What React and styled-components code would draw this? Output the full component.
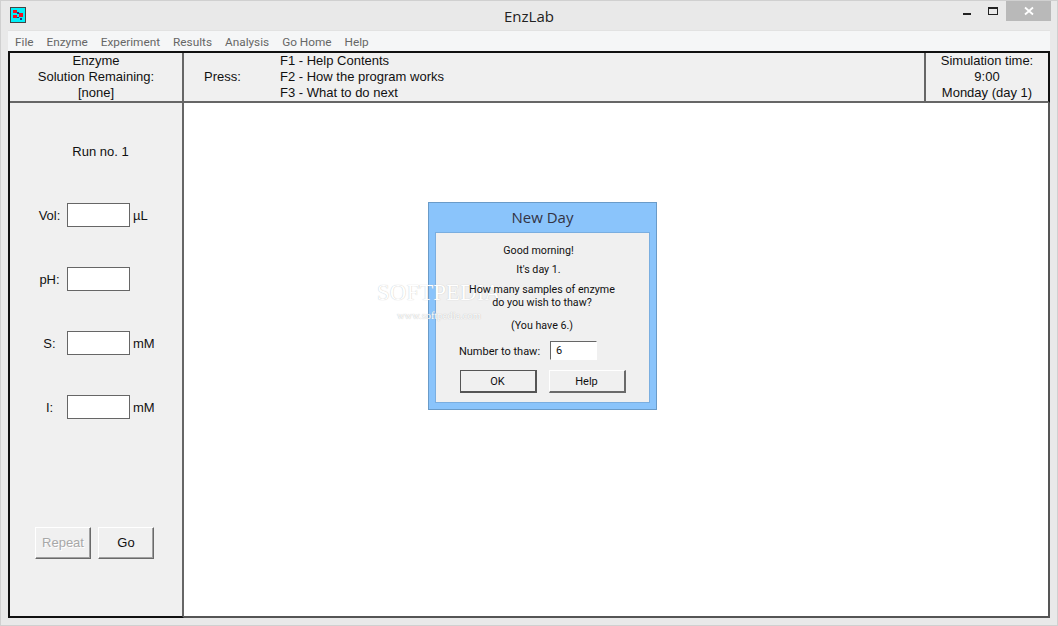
import React from 'react';
import styled, { createGlobalStyle } from 'styled-components';

const GlobalStyle = createGlobalStyle`
	html, body {
		margin: 0;
		padding: 0;
		background: #e9e9e9;
	}
	* {
		box-sizing: border-box;
	}
`;

const fields = [
	{ label: 'Vol:', unit: 'µL' },
	{ label: 'pH:', unit: '' },
	{ label: 'S:', unit: 'mM' },
	{ label: 'I:', unit: 'mM' },
];

const menus = ['File', 'Enzyme', 'Experiment', 'Results', 'Analysis', 'Go Home', 'Help'];

const AppIcon = () => (
	<svg width="16" height="16" viewBox="0 0 16 16">
		<rect x="0.5" y="0.5" width="15" height="15" fill="#00f0f8" stroke="#444" />
		<rect x="3" y="3" width="4" height="3" fill="#f01020" />
		<rect x="9" y="6" width="4" height="4" fill="#f01020" />
		<rect x="3" y="8" width="4" height="3" fill="#f01020" />
		<rect x="7" y="5" width="2" height="2" fill="#203080" />
		<rect x="7" y="10" width="2" height="1" fill="#203080" />
		<rect x="10" y="11" width="2" height="2" fill="#203080" />
	</svg>
);

const App = () => (
	<Window>
		<GlobalStyle />
		<TitleBar>
			<IconSlot><AppIcon /></IconSlot>
			<Title>EnzLab</Title>
			<Controls>
				<Control>
					<svg width="12" height="12" viewBox="0 0 12 12"><rect x="2" y="8" width="8" height="2" fill="#222" /></svg>
				</Control>
				<Control>
					<svg width="12" height="12" viewBox="0 0 12 12"><rect x="1.5" y="2.5" width="9" height="7" fill="none" stroke="#222" /><rect x="1" y="2" width="10" height="2" fill="#222" /></svg>
				</Control>
				<CloseControl>
					<svg width="10" height="10" viewBox="0 0 10 10"><path d="M1 1.5 L9 8.5 M9 1.5 L1 8.5" stroke="#fff" strokeWidth="1.8" /></svg>
				</CloseControl>
			</Controls>
		</TitleBar>
		<MenuBar>
			{menus.map(item => (
				<MenuItem key={item}>{item}</MenuItem>
			))}
		</MenuBar>
		<Frame>
			<Header>
				<EnzymeCell>
					<div>Enzyme</div>
					<div>Solution Remaining:</div>
					<div>[none]</div>
				</EnzymeCell>
				<PressCell>
					<PressLabel>Press:</PressLabel>
					<div>
						<div>F1 - Help Contents</div>
						<div>F2 - How the program works</div>
						<div>F3 - What to do next</div>
					</div>
				</PressCell>
				<TimeCell>
					<div>Simulation time:</div>
					<div>9:00</div>
					<div>Monday (day 1)</div>
				</TimeCell>
			</Header>
			<Body>
				<Sidebar>
					<RunLabel>Run no. 1</RunLabel>
					{fields.map(field => (
						<FieldRow key={field.label}>
							<FieldLabel>{field.label}</FieldLabel>
							<FieldInput />
							<FieldUnit>{field.unit}</FieldUnit>
						</FieldRow>
					))}
					<ButtonRow>
						<PanelButton disabled>Repeat</PanelButton>
						<PanelButton>Go</PanelButton>
					</ButtonRow>
				</Sidebar>
				<Canvas>
					<Dialog>
						<DialogTitle>New Day</DialogTitle>
						<DialogBody>
							<DialogLine $gap={6} $pad={8}>Good morning!</DialogLine>
							<DialogLine $gap={7} $pad={8}>It's day 1.</DialogLine>
							<DialogLine $gap={10} $pad={1}>How many samples of enzyme<br />do you wish to thaw?</DialogLine>
							<DialogLine $gap={6} $pad={1}>(You have 6.)</DialogLine>
							<ThawRow>
								<ThawLabel>Number to thaw:</ThawLabel>
								<ThawBox>6</ThawBox>
							</ThawRow>
							<DialogButtons>
								<DialogButton $primary>OK</DialogButton>
								<DialogButton>Help</DialogButton>
							</DialogButtons>
						</DialogBody>
					</Dialog>
					<Watermark>
						<WatermarkName>SOFTPEDIA</WatermarkName>
						<WatermarkUrl>www.softpedia.com</WatermarkUrl>
					</Watermark>
				</Canvas>
			</Body>
		</Frame>
	</Window>
);

export default App;

const Window = styled.div`
	width: 1058px;
	height: 626px;
	background: #e9e9e9;
	border: 1px solid #d0d0d0;
	padding: 0 7px 7px;
	display: flex;
	flex-direction: column;
	overflow: hidden;
	position: relative;
`;

const TitleBar = styled.div`
	height: 29px;
	flex: none;
	display: flex;
	align-items: flex-start;
	position: relative;
`;

const IconSlot = styled.div`
	width: 16px;
	height: 16px;
	margin: 6px 0 0 2px;
`;

const Title = styled.div`
	text-align: center;
	font: 15px/30px "Open Sans", sans-serif;
	color: #222;
	position: absolute;
	left: 0;
	right: 0;
`;

const Controls = styled.div`
	margin-left: auto;
	display: flex;
	z-index: 1;
	margin-right: -1px;
`;

const Control = styled.div`
	width: 26px;
	height: 20px;
	display: flex;
	align-items: center;
	justify-content: center;
`;

const CloseControl = styled(Control)`
	width: 45px;
	background: #b9b9b9;
`;

const MenuBar = styled.div`
	height: 21px;
	flex: none;
	background: #f5f6f7;
	display: flex;
	align-items: center;
	padding: 1px 0 0 7px;
	gap: 13px;
	border-top: 1px solid #e2e2e2;
`;

const MenuItem = styled.span`
	font: 11.8px Roboto, sans-serif;
	color: #666;
`;

const Frame = styled.div`
	flex: 1;
	border-top: 2px solid #111;
	border-left: 2px solid #111;
	display: flex;
	flex-direction: column;
	min-height: 0;
`;

const Header = styled.div`
	height: 50px;
	flex: none;
	display: grid;
	grid-template-columns: 174px 1fr 126px;
	background: #f0f0f0;
	font: 13px/16px "Liberation Sans", sans-serif;
	color: #111;
`;

const EnzymeCell = styled.div`
	text-align: center;
	border-right: 2px solid #666;
	border-bottom: 2px solid #666;
`;

const PressCell = styled.div`
	display: flex;
	padding-left: 20px;
	align-items: flex-start;
	border-bottom: 2px solid #666;
`;

const PressLabel = styled.div`
	width: 76px;
	margin-top: 16px;
`;

const TimeCell = styled.div`
	text-align: center;
	border-left: 2px solid #666;
	border-right: 2px solid #111;
	border-bottom: 2px solid #666;
`;

const Body = styled.div`
	flex: 1;
	display: flex;
	min-height: 0;
`;

const Sidebar = styled.div`
	width: 174px;
	flex: none;
	background: #f0f0f0;
	border-right: 2px solid #666;
	border-bottom: 2px solid #111;
	padding-top: 41px;
	display: flex;
	flex-direction: column;
	font: 13px/16px "Liberation Sans", sans-serif;
	color: #111;
`;

const RunLabel = styled.div`
	text-align: center;
	padding-left: 9px;
	height: 39px;
`;

const FieldRow = styled.div`
	height: 24px;
	margin: 20px 0;
	display: flex;
	align-items: center;
`;

const FieldLabel = styled.div`
	width: 57px;
	text-align: center;
	padding: 2px 0 0 22px;
`;

const FieldInput = styled.div`
	width: 63px;
	height: 24px;
	background: #fff;
	border: 1px solid #666;
`;

const FieldUnit = styled.div`
	margin-left: 3px;
	padding-top: 2px;
`;

const ButtonRow = styled.div`
	display: flex;
	gap: 7px;
	padding-left: 25px;
	margin-top: 88px;
`;

const PanelButton = styled.div`
	width: 56px;
	height: 32px;
	display: flex;
	align-items: center;
	justify-content: center;
	background: #f0f0f0;
	border: 1px solid;
	border-color: #fff #6a6a6a #6a6a6a #fff;
	box-shadow: inset -1px -1px 0 #a0a0a0;
	color: ${p => (p.disabled ? '#a8a8a8' : '#111')};
	text-shadow: ${p => (p.disabled ? '1px 1px 0 #fff' : 'none')};
`;

const Canvas = styled.div`
	flex: 1;
	background: #fff;
	position: relative;
	border-right: 2px solid #555;
	border-bottom: 2px solid #555;
`;

const Dialog = styled.div`
	position: absolute;
	left: 244px;
	top: 99px;
	width: 229px;
	height: 208px;
	background: #8ac4fb;
	border: 1px solid #6a9bc8;
	padding: 0 6px 6px;
	display: flex;
	flex-direction: column;
`;

const DialogTitle = styled.div`
	height: 29px;
	flex: none;
	text-align: center;
	font: 15px/29px "Open Sans", sans-serif;
	color: #334;
`;

const DialogBody = styled.div`
	flex: 1;
	background: #f0f0f0;
	border: 1px solid #7aaee0;
	padding-top: 11px;
	display: flex;
	flex-direction: column;
	align-items: center;
	font: 11px/13px Roboto, sans-serif;
	color: #111;
`;

const DialogLine = styled.div`
	position: relative;
	z-index: 2;
	text-align: center;
	font-size: 10.7px;
	margin-bottom: ${p => p.$gap}px;
	padding-right: ${p => p.$pad}px;
`;

const ThawRow = styled.div`
	display: flex;
	align-items: center;
	gap: 10px;
	margin-top: 3px;
	padding-right: 29px;
`;

const ThawLabel = styled.span`
	padding-top: 1px;
`;

const ThawBox = styled.div`
	width: 47px;
	height: 19px;
	background: #fff;
	border: 1px solid #666;
	border-right-color: #fff;
	border-bottom-color: #fff;
	padding: 2px 0 0 5px;
`;

const DialogButtons = styled.div`
	display: flex;
	gap: 12px;
	margin-top: 10px;
`;

const DialogButton = styled.div`
	width: 77px;
	height: 23px;
	display: flex;
	align-items: center;
	justify-content: center;
	background: #f0f0f0;
	border: 1px solid;
	border-color: ${p => (p.$primary ? '#555' : '#fff #6a6a6a #6a6a6a #fff')};
	border-width: 1px 2px 2px 1px;
`;

const Watermark = styled.div`
	position: absolute;
	z-index: 1;
	left: 193px;
	top: 178px;
	pointer-events: none;
	text-align: center;
`;

const WatermarkName = styled.div`
	font: 23px/24px "Liberation Serif", serif;
	color: #fff;
	text-shadow: 0 0 1px #b8b8b8;
`;

const WatermarkUrl = styled.div`
	font: 10.5px/14px "Liberation Serif", serif;
	color: #fff;
	text-shadow: 0 0 1px #a8a8a8;
	margin-top: 4px;
`;
